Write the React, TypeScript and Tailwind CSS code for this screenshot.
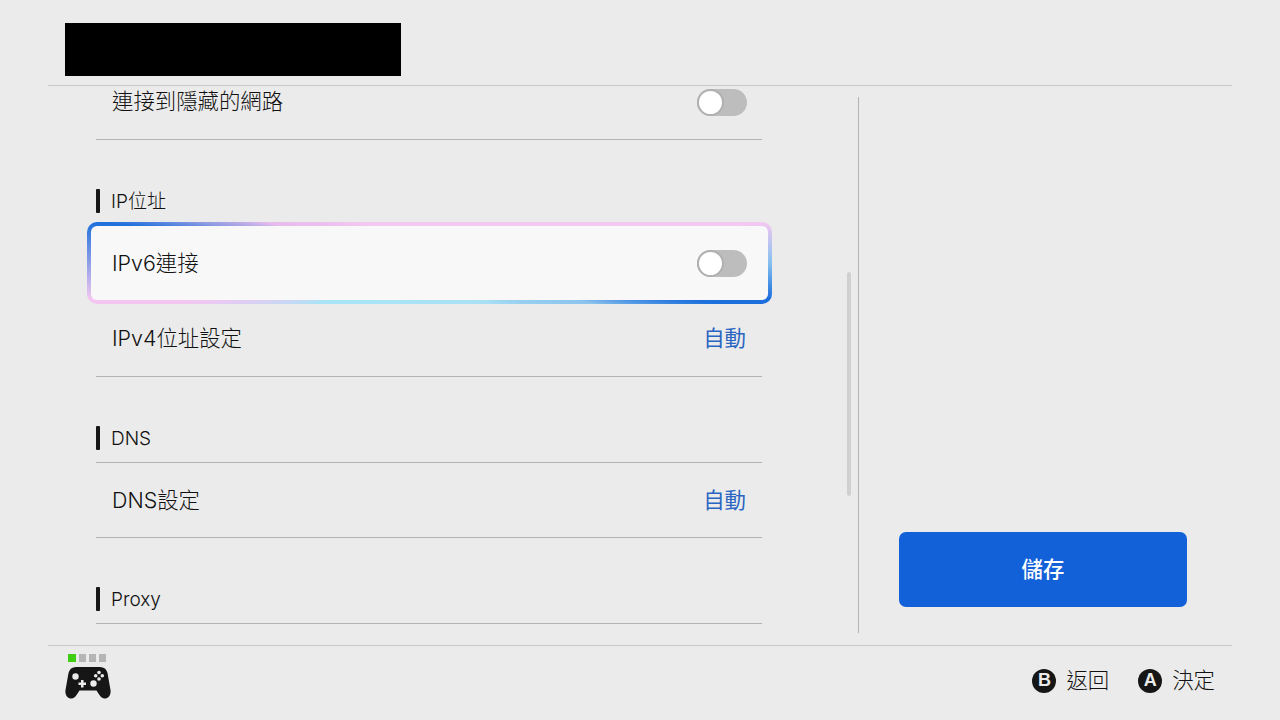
const font = { fontFamily: 'Inter, "Noto Sans CJK TC", sans-serif' };

function Toggle({ className }: { className?: string }) {
  return (
    <div className={`flex h-[27px] w-[50px] items-center rounded-full bg-[#bdbdbd] ${className ?? ''}`}>
      <div className="h-[27px] w-[27px] rounded-full border-2 border-[#b0b0b0] bg-white" />
    </div>
  );
}

function Row({ label, value, toggle, short }: { label: string; value?: string; toggle?: boolean; short?: boolean }) {
  return (
    <div className={`flex ${short ? 'h-[75px]' : 'h-[76px]'} items-center justify-between border-b border-[#b4b4b4] pl-4 pr-[15px] text-[21.4px] font-light leading-[28px] text-[#111111]`}>
      <span className={short ? '' : 'pb-px'}>{label}</span>
      {toggle && <Toggle className="mt-px" />}
      {value && <span className={`mr-px font-normal text-[#2a65c2] ${short ? '' : 'pb-px'}`}>{value}</span>}
    </div>
  );
}

function Section({ title, line }: { title: string; line?: boolean }) {
  return (
    <div className={line ? 'border-b border-[#b4b4b4] pb-3 pt-[49px]' : 'pb-3 pt-[49px]'}>
      <div className="flex h-6 items-center gap-[11px] text-[19px] font-light leading-6 text-[#111111]">
        <span className="h-6 w-1 rounded-[1px] bg-[#161616]" />
        <span className="pt-px">{title}</span>
      </div>
    </div>
  );
}

function FocusRow() {
  return (
    <div className="relative h-[76px]">
      <div className="absolute -bottom-[3px] -left-[9px] -right-[10px] -top-[3px] rounded-[10px] bg-[conic-gradient(#f5c8f1_0deg,#f5c8f1_83deg,#86c0f0_90deg,#1c6fdc_96deg,#1c6fdc_98deg,#8cc4ee_104deg,#a9e0f5_125deg,#a9e4f6_250deg,#f2c6f1_261deg,#f2c6f1_264deg,#1c6fdc_277deg,#8f9be2_280deg,#e7bcec_284deg,#f5c8f1_300deg,#f5c8f1_360deg)] p-1">
        <div className="flex h-full items-center justify-between rounded-[6px] bg-[#f8f8f9] pl-[21px] pr-[21px] text-[21.4px] font-light leading-[28px] text-[#111111]">
          <span>IPv6連接</span>
          <Toggle />
        </div>
      </div>
    </div>
  );
}

function Controller() {
  return (
    <svg width="46" height="34" viewBox="0 0 46 34">
      <path
        fill="#161616"
        d="M11 1h24c4 0 6.500 2 7.500 6l3 17c.6 4.500-1.500 8-5 8.500-2.500.4-4.500-1-6-3.500l-3-4.500H14.500l-3 4.500c-1.500 2.500-3.500 3.900-6 3.500-3.500-.5-5.600-4-5-8.500l3-17C4.500 3 7 1 11 1z"
      />
      <circle cx="10.500" cy="10.500" r="3.200" fill="#ebebeb" />
      <circle cx="28.500" cy="17.500" r="3.200" fill="#ebebeb" />
      <path fill="#ebebeb" d="M16 14h2.500v2.500H21V19h-2.500v2.500H16V19h-2.500v-2.500H16z" />
      <circle cx="34" cy="6.500" r="1.800" fill="#ebebeb" />
      <circle cx="34" cy="13" r="1.800" fill="#ebebeb" />
      <circle cx="30.700" cy="9.700" r="1.800" fill="#ebebeb" />
      <circle cx="37.300" cy="9.700" r="1.800" fill="#ebebeb" />
    </svg>
  );
}

function Hint({ k, label }: { k: string; label: string }) {
  return (
    <div className="flex items-center gap-[10px]">
      <span className="flex h-6 w-6 items-center justify-center rounded-full bg-[#161616] font-['Liberation_Sans'] text-[18px] font-bold text-[#ebebeb]">
        {k}
      </span>
      <span className="pb-px text-[21.4px] font-light leading-[28px] text-[#111111]">{label}</span>
    </div>
  );
}

export default function App() {
  return (
    <div className="flex h-[720px] w-[1280px] flex-col overflow-hidden bg-[#ebebeb] px-12" style={font}>
      <div className="h-[86px] shrink-0 border-b border-[#c8c8c8] pl-[17px] pt-[23px]">
        <div className="h-[53px] w-[336px] bg-black" />
      </div>

      <div className="flex h-[559px] shrink-0">
        <div className="h-full w-[810px] shrink-0 overflow-hidden pl-12">
          <div className="-mt-[22px] w-[666px]">
            <Row label="連接到隱藏的網路" toggle />
            <Section title="IP位址" />
            <FocusRow />
            <Row label="IPv4位址設定" value="自動" />
            <Section title="DNS" line />
            <Row label="DNS設定" value="自動" short />
            <Section title="Proxy" line />
          </div>
        </div>

        <div className="relative h-full w-[0px]">
          <div className="absolute left-[-11px] top-[186px] h-[224px] w-1 rounded-full bg-[#d0d0d0]" />
        </div>

        <div className="mb-3 mt-[11px] flex flex-1 flex-col justify-end border-l border-[#b4b4b4] pb-[26px] pl-10 pr-[45px]">
          <div className="flex h-[75px] w-[288px] items-center justify-center rounded-[7px] bg-[#1261d8] text-[21.4px] font-medium text-white">
            儲存
          </div>
        </div>
      </div>

      <div className="flex h-[75px] shrink-0 items-start justify-between border-t border-[#c8c8c8] pl-[17px] pr-[17px]">
        <div className="flex flex-col pt-2">
          <div className="ml-[3px] flex gap-[2.5px]">
            <span className="h-[8px] w-[8px] bg-[#3ecf10]" />
            <span className="h-[8px] w-[7.500px] bg-[#b5b5b5]" />
            <span className="h-[8px] w-[7.500px] bg-[#b5b5b5]" />
            <span className="h-[8px] w-[7.500px] bg-[#b5b5b5]" />
          </div>
          <div className="mt-[4px]">
            <Controller />
          </div>
        </div>
        <div className="flex h-[69px] items-center gap-[29px]">
          <Hint k="B" label="返回" />
          <Hint k="A" label="決定" />
        </div>
      </div>
    </div>
  );
}
